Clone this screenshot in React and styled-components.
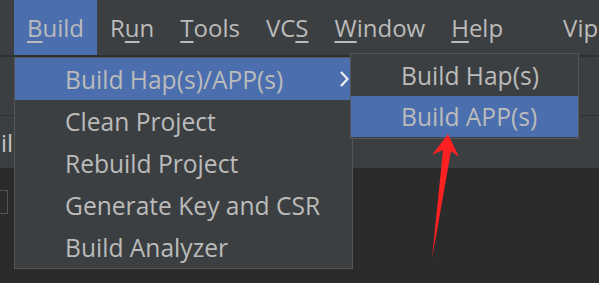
import styled, { createGlobalStyle } from 'styled-components';

const GlobalStyle = createGlobalStyle`
  html, body {
    margin: 0;
    padding: 0;
    background: #2b2b2b;
  }
  body {
    font-family: "Open Sans", "Noto Sans", sans-serif;
  }
`;

const Screen = styled.div`
  position: relative;
  width: 599px;
  height: 283px;
  overflow: hidden;
  background: #2b2b2b;
  display: flex;
  flex-direction: column;
  color: #bbbbbb;
`;

const MenuBar = styled.div`
  height: 55px;
  display: flex;
  align-items: stretch;
  padding-left: 14px;
  background: #3c3f41;
  border-bottom: 2px solid #2e3032;
`;

const MenuTitle = styled.div`
  display: flex;
  align-items: center;
  padding: 0 13px;
  font-size: 24px;
  background: ${(p) => (p.$active ? '#4b6eaf' : 'transparent')};
  margin-left: ${(p) => p.$gap || 0}px;
  white-space: nowrap;
  u {
    text-decoration-thickness: 2px;
    text-underline-offset: 4px;
  }
`;

const ToolRow = styled.div`
  height: 58px;
  background: #3c3f41;
  border-bottom: 1px solid #323232;
`;

const TabRow = styled.div`
  height: 52px;
  background: #3c3f41;
  display: flex;
  align-items: center;
`;

const TabLabel = styled.span`
  font-size: 24px;
  padding-left: 1px;
  color: #c4c4c4;
`;

const Editor = styled.div`
  flex: 1;
  background: #2b2b2b;
  padding-top: 22px;
`;

const GutterBox = styled.div`
  width: 7px;
  height: 22px;
  border: 1px solid #555555;
  border-left: none;
`;

const Menu = styled.div`
  position: absolute;
  left: ${(p) => p.$left}px;
  top: ${(p) => p.$top}px;
  width: ${(p) => p.$width}px;
  background: #3c3f41;
  border: 1px solid #565656;
  padding: ${(p) => (p.$pad ? '1px 0' : '0')};
  display: flex;
  flex-direction: column;
`;

const MenuItem = styled.div`
  height: ${(p) => p.$h}px;
  display: flex;
  align-items: center;
  justify-content: space-between;
  padding: 0 2px 0 50px;
  font-size: 24.6px;
  white-space: nowrap;
  background: ${(p) => (p.$active ? '#4b6eaf' : 'transparent')};
`;

const Chevron = () => (
  <svg width="12" height="18" viewBox="0 0 12 18">
    <path d="M3 2 L9.5 9 L3 16" fill="none" stroke="#f0f0f0" strokeWidth="2.2" />
  </svg>
);

const ArrowLayer = styled.svg`
  position: absolute;
  left: 0;
  top: 0;
  pointer-events: none;
`;

const menuBar = [
  { pre: '', key: 'B', post: 'uild', active: true },
  { pre: 'R', key: 'u', post: 'n' },
  { pre: '', key: 'T', post: 'ools' },
  { pre: 'VC', key: 'S', post: '' },
  { pre: '', key: 'W', post: 'indow' },
  { pre: '', key: 'H', post: 'elp' },
];

const buildItems = [
  'Build Hap(s)/APP(s)',
  'Clean Project',
  'Rebuild Project',
  'Generate Key and CSR',
  'Build Analyzer',
];

const App = () => {
  return (
    <>
      <GlobalStyle />
      <Screen>
        <MenuBar>
          {menuBar.map((m) => (
            <MenuTitle key={m.pre + m.key} $active={m.active}>
              {m.pre}
              <u>{m.key}</u>
              {m.post}
            </MenuTitle>
          ))}
          <MenuTitle $gap={34}>Vip</MenuTitle>
        </MenuBar>
        <ToolRow />
        <TabRow>
          <TabLabel>ili</TabLabel>
        </TabRow>
        <Editor>
          <GutterBox />
        </Editor>

        <Menu $left={14} $top={57} $width={337}>
          {buildItems.map((t, i) => (
            <MenuItem key={t} $h={42} $active={i === 0}>
              {t}
              {i === 0 && <Chevron />}
            </MenuItem>
          ))}
        </Menu>

        <Menu $left={350} $top={53} $width={227} $pad>
          <MenuItem $h={41}>Build Hap(s)</MenuItem>
          <MenuItem $h={41} $active>
            Build APP(s)
          </MenuItem>
        </Menu>

        <ArrowLayer width="599" height="283" viewBox="0 0 599 283">
          <polygon
            points="448,134 459,157 451,151 432,259 443,150 432,155"
            fill="#ff2121"
          />
        </ArrowLayer>
      </Screen>
    </>
  );
};

export default App;
